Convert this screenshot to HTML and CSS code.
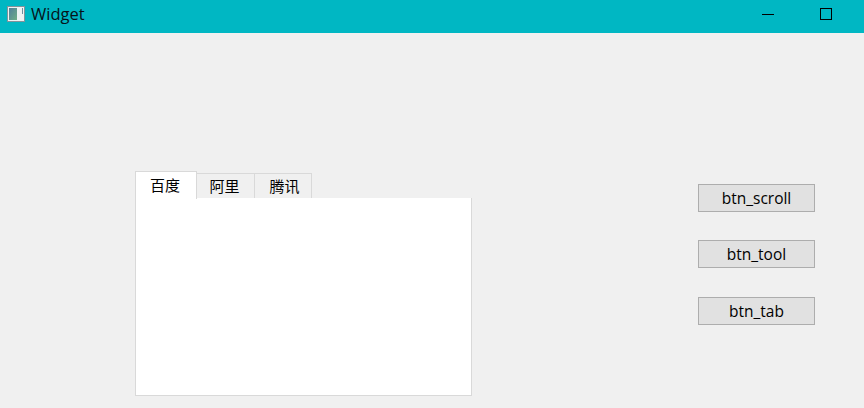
FILE: index.html
```html
<!DOCTYPE html>
<html lang="zh">
<head>
<meta charset="utf-8">
<title>Widget</title>
<link rel="stylesheet" href="styles.css">
</head>
<body>
<div class="window">
  <header class="titlebar">
    <svg class="app-icon" width="18" height="16" viewBox="0 0 18 16">
      <defs>
        <linearGradient id="pic" x1="0" y1="0" x2="1" y2="1">
          <stop offset="0" stop-color="#4f7f9a"/>
          <stop offset="1" stop-color="#6fae86"/>
        </linearGradient>
      </defs>
      <rect x="0.5" y="0.5" width="17" height="15" fill="#eef3f3" stroke="#83929a"/>
      <rect x="2" y="2" width="8" height="12" fill="url(#pic)"/>
      <rect x="15" y="2" width="1" height="6" fill="#6f8f9f"/>
    </svg>
    <span class="title">Widget</span>
    <div class="controls">
      <span class="ctl"><span class="min"></span></span>
      <span class="ctl"><span class="max"></span></span>
    </div>
  </header>
  <main class="content">
    <section class="tabwidget">
      <div class="tabs">
        <div class="tab active">百度</div>
        <div class="tab second">阿里</div>
        <div class="tab third">腾讯</div>
      </div>
      <div class="pane"></div>
    </section>
    <aside class="buttons">
      <button class="btn">btn_scroll</button>
      <button class="btn">btn_tool</button>
      <button class="btn last">btn_tab</button>
    </aside>
  </main>
</div>
</body>
</html>
```
FILE: styles.css
```css
html, body {
  margin: 0;
  padding: 0;
  height: 100%;
  overflow: hidden;
}
.window {
  width: 864px;
  height: 408px;
  background: #f0f0f0;
  font-family: "Liberation Sans", "Noto Sans CJK SC", sans-serif;
  color: #000;
  display: flex;
  flex-direction: column;
}
.titlebar {
  height: 33px;
  flex: none;
  background: #00b7c3;
  display: flex;
  align-items: center;
  padding-left: 7px;
  padding-bottom: 5px;
  box-sizing: border-box;
}
.app-icon { display: block; }
.title {
  margin-left: 6px;
  font-family: "Open Sans", sans-serif;
  font-size: 16.5px;
  line-height: 20px;
  color: #06131a;
}
.controls {
  margin-left: auto;
  display: flex;
  padding-right: 9px;
}
.ctl {
  width: 58px;
  height: 14px;
  display: flex;
  align-items: center;
  justify-content: center;
}
.min { width: 12px; height: 1px; background: #000; }
.max { width: 10px; height: 10px; border: 1px solid #000; }
.content {
  flex: 1;
  display: flex;
  align-items: flex-start;
  padding: 138px 49px 0 135px;
}
.tabwidget {
  width: 337px;
  display: flex;
  flex-direction: column;
}
.tabs {
  display: flex;
  align-items: flex-start;
  height: 27px;
  position: relative;
  z-index: 1;
}
.tab {
  box-sizing: border-box;
  height: 25px;
  margin-top: 2px;
  border: 1px solid #d9d9d9;
  border-left: 0;
  border-bottom: 0;
  background: #f0f0f0;
  font-family: "Noto Sans CJK SC", sans-serif;
  font-size: 15px;
  line-height: 24px;
  text-align: center;
}
.tab.active {
  width: 62px;
  height: 28px;
  margin-top: 0;
  padding-right: 2px;
  background: #fff;
  border-left: 1px solid #d9d9d9;
  line-height: 26px;
}
.tab.second { width: 58px; padding-right: 2px; }
.tab.third { width: 57px; padding-left: 3px; }
.pane {
  box-sizing: border-box;
  height: 198px;
  background: #fff;
  border: 1px solid #d9d9d9;
  border-top: 0;
}
.buttons {
  margin-left: auto;
  padding-top: 13px;
  display: flex;
  flex-direction: column;
  gap: 28px;
}
.btn {
  box-sizing: border-box;
  width: 117px;
  height: 28px;
  margin: 0;
  padding: 0;
  border: 1px solid #adadad;
  border-radius: 0;
  background: #e1e1e1;
  font-family: "Open Sans", sans-serif;
  font-size: 15.5px;
  color: #000;
}
.btn.last { margin-top: 1px; }
```
